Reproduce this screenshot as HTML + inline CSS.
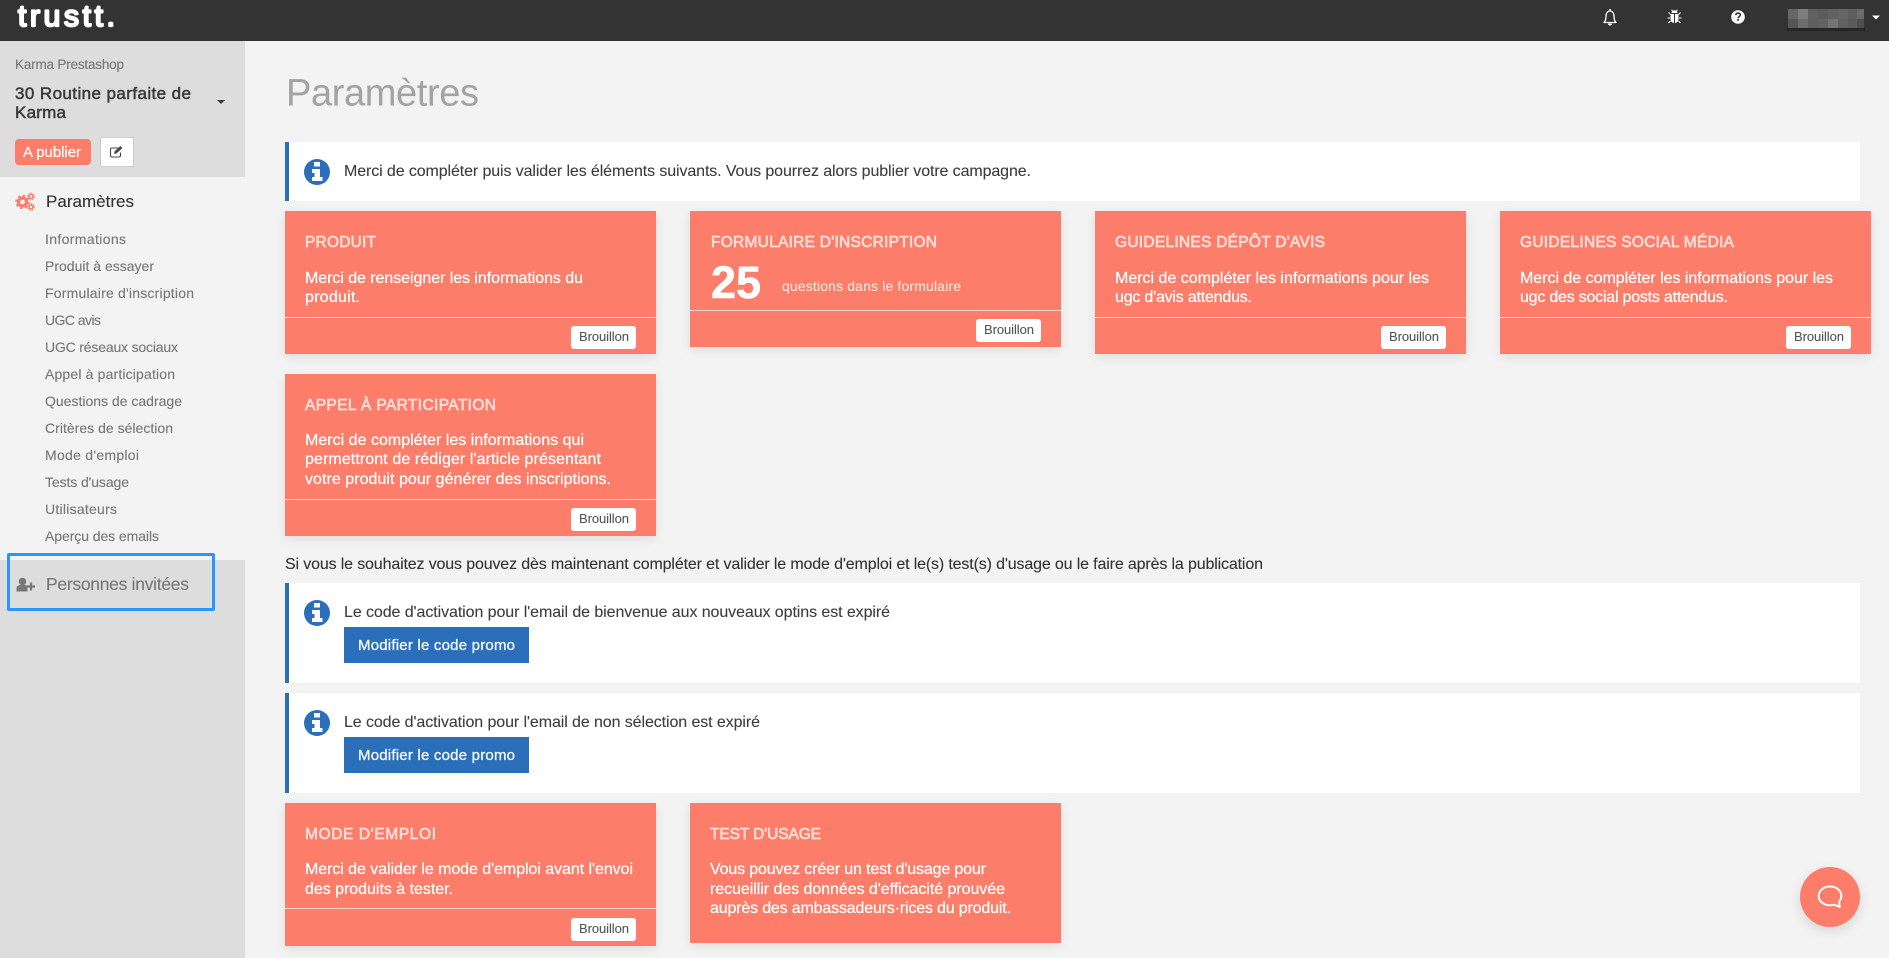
<!DOCTYPE html>
<html lang="fr">
<head>
<meta charset="utf-8">
<title>Paramètres</title>
<style>
html,body{margin:0;padding:0;width:1889px;height:958px;overflow:hidden;background:#f3f3f3}
.b{position:absolute;box-sizing:border-box}
.card{background:#fc7d69;box-shadow:0 3px 10px rgba(0,0,0,.09)}
.div{background:#f6d5cf;height:1px}
.br{background:#fff;border-radius:3px;width:65px;height:23px}
.al{background:#fff;border-left:4px solid #2b6fbb;left:285px;width:1575px}
.pb{background:#2b6fbb;left:344px;width:185px;height:36px}
svg.l{position:absolute;left:0;top:0}
text{font-family:"Liberation Sans",sans-serif;white-space:pre}
.s{font-size:14px;fill:#777;stroke:#777;stroke-width:.12}
.c{font-size:16px;fill:#fff;stroke:#fff;stroke-width:.22}
.h{font-size:15.5px;font-weight:400;fill:#ffdcd6;stroke:#ffdcd6;stroke-width:.7}
.a{font-size:16px;fill:#3d3d3d;stroke:#3d3d3d;stroke-width:.1}
.w{font-size:13px;fill:#555;stroke:#555;stroke-width:.1}
.p{font-size:15px;fill:#f0f5fb;stroke:#f0f5fb;stroke-width:.35}
</style>
</head>
<body>
<div class="b" style="left:0;top:0;width:1889px;height:41px;background:#333"></div>
<div class="b" style="left:0;top:41px;width:245px;height:136px;background:#ddd"></div>
<div class="b" style="left:0;top:560px;width:245px;height:398px;background:#ddd"></div>
<div class="b" style="left:15px;top:139px;width:76px;height:26px;background:#fc7d69;border-radius:4px"></div>
<div class="b" style="left:100px;top:137px;width:34px;height:30px;background:#fff;border:1px solid #ccc"></div>
<div class="b" style="left:7px;top:553px;width:208px;height:58px;border:3px solid #2b95ff;border-radius:2px"></div>

<div class="b al" style="top:142px;height:59px"></div>
<div class="b card" style="left:285px;top:211px;width:371px;height:143px"></div>
<div class="b div" style="left:285px;top:317px;width:371px"></div>
<div class="b br" style="left:571px;top:326px"></div>
<div class="b card" style="left:690px;top:211px;width:371px;height:136px"></div>
<div class="b div" style="left:690px;top:310px;width:371px"></div>
<div class="b br" style="left:976px;top:319px"></div>
<div class="b card" style="left:1095px;top:211px;width:371px;height:143px"></div>
<div class="b div" style="left:1095px;top:317px;width:371px"></div>
<div class="b br" style="left:1381px;top:326px"></div>
<div class="b card" style="left:1500px;top:211px;width:371px;height:143px"></div>
<div class="b div" style="left:1500px;top:317px;width:371px"></div>
<div class="b br" style="left:1786px;top:326px"></div>
<div class="b card" style="left:285px;top:374px;width:371px;height:162px"></div>
<div class="b div" style="left:285px;top:499px;width:371px"></div>
<div class="b br" style="left:571px;top:508px"></div>
<div class="b al" style="top:583px;height:100px"></div>
<div class="b pb" style="top:627px"></div>
<div class="b al" style="top:693px;height:100px"></div>
<div class="b pb" style="top:737px"></div>
<div class="b card" style="left:285px;top:803px;width:371px;height:143px"></div>
<div class="b div" style="left:285px;top:908px;width:371px"></div>
<div class="b br" style="left:571px;top:918px"></div>
<div class="b card" style="left:690px;top:803px;width:371px;height:140px"></div>
<div class="b" style="left:1800px;top:867px;width:60px;height:60px;border-radius:50%;background:#fc7d69;box-shadow:0 4px 12px rgba(0,0,0,.12)"></div>

<svg class="l" width="1889" height="958" viewBox="0 0 1889 958" xmlns="http://www.w3.org/2000/svg">
<!-- logo -->
<text x="18" y="26" font-size="30" fill="#fff" stroke="#fff" stroke-width="2.200" stroke-linejoin="round" textLength="97">trustt.</text>

<!-- blurred user -->
<g>
<rect x="1787" y="28" width="78" height="3" fill="#262626"/>
<rect x="1788" y="9" width="10" height="10" fill="#666"/><rect x="1798" y="9" width="10" height="10" fill="#7d7d7d"/><rect x="1808" y="9" width="10" height="10" fill="#606060"/><rect x="1818" y="9" width="10" height="10" fill="#5c5c5c"/><rect x="1828" y="9" width="10" height="10" fill="#626262"/><rect x="1838" y="9" width="10" height="10" fill="#656565"/><rect x="1848" y="9" width="9" height="10" fill="#5e5e5e"/><rect x="1857" y="9" width="7" height="10" fill="#6a6a6a"/>
<rect x="1788" y="19" width="10" height="9" fill="#565656"/><rect x="1798" y="19" width="10" height="9" fill="#6c6c6c"/><rect x="1808" y="19" width="10" height="9" fill="#5f5f5f"/><rect x="1818" y="19" width="10" height="9" fill="#626262"/><rect x="1828" y="19" width="10" height="9" fill="#737373"/><rect x="1838" y="19" width="10" height="9" fill="#616161"/><rect x="1848" y="19" width="9" height="9" fill="#5a5a5a"/><rect x="1857" y="19" width="7" height="9" fill="#4e4e4e"/>
</g>
<path d="M1872 15.500h8l-4 4z" fill="#fff"/>

<!-- bell -->
<path d="M1604 22.500c1.800-1.600 2-3.600 2-6.500 0-3 1.800-5 4-5s4 2 4 5c0 2.900.2 4.900 2 6.500z" fill="none" stroke="#fff" stroke-width="1.300" stroke-linejoin="round"/>
<path d="M1610 9v2" stroke="#fff" stroke-width="1.500"/>
<path d="M1608 23.500a2 2 0 0 0 4 0z" fill="#fff"/>
<!-- bug -->
<g fill="#fff">
<path d="M1671.500 13a3 2.800 0 0 1 6 0z"/>
<path d="M1670.500 14h3.500v9c-2.200-.3-3.500-1.800-3.500-4z"/>
<path d="M1675 14h3.500v5c0 2.200-1.300 3.700-3.500 4z"/>
</g>
<path d="M1670.500 14.500l-2-2M1678.500 14.500l2-2M1670 18h-2.500M1679 18h2.500M1670.500 21l-2 2M1678.500 21l2 2M1672.500 10.800l-1-1M1676.500 10.800l1-1" stroke="#fff" stroke-width="1.100" fill="none"/>
<!-- help -->
<circle cx="1738" cy="17" r="6.800" fill="#fff"/>
<path d="M1735.800 15.200c.2-1.500 1.100-2.200 2.300-2.200 1.300 0 2.200.8 2.200 1.900 0 1.700-2.200 1.700-2.200 3.300" fill="none" stroke="#333" stroke-width="1.600"/>
<rect x="1737.200" y="19" width="1.700" height="1.800" fill="#333"/>

<!-- sidebar top -->
<text x="15" y="69" font-size="13.500" fill="#777" stroke="#777" stroke-width=".12" textLength="109">Karma Prestashop</text>
<text x="15" y="99" font-size="17" fill="#3a3a3a" stroke="#3a3a3a" stroke-width=".5" textLength="176">30 Routine parfaite de</text>
<text x="15" y="118" font-size="17" fill="#3a3a3a" stroke="#3a3a3a" stroke-width=".5" textLength="51">Karma</text>
<path d="M217 100h8l-4 4z" fill="#3a3a3a"/>
<text x="23" y="157" font-size="15" fill="#fff" stroke="#fff" stroke-width=".2" textLength="58">A publier</text>
<!-- edit icon -->
<path d="M118.500 148h-6.500a1.500 1.500 0 0 0-1.500 1.500v6a1.500 1.500 0 0 0 1.500 1.500h7a1.500 1.500 0 0 0 1.500-1.500v-3" fill="none" stroke="#444" stroke-width="1.100"/>
<path d="M114 154l.6-2.600 5.800-5.400 2 2-5.800 5.400z" fill="#444"/>

<!-- gears -->
<g fill="none" stroke="#fc7d69">
<circle cx="22.500" cy="202" r="4" stroke-width="3.200"/>
<circle cx="22.500" cy="202" r="6.200" stroke-width="2" stroke-dasharray="2.400 2.470"/>
<circle cx="31" cy="196.500" r="2" stroke-width="1.600"/>
<circle cx="31" cy="196.500" r="3.400" stroke-width="1.200" stroke-dasharray="1.300 1.370"/>
<circle cx="31" cy="207" r="2" stroke-width="1.600"/>
<circle cx="31" cy="207" r="3.400" stroke-width="1.200" stroke-dasharray="1.300 1.370"/>
</g>

<!-- sidebar nav -->
<text x="46" y="207" font-size="17" fill="#333" stroke="#333" stroke-width=".12" textLength="88">Paramètres</text>
<text class="s" x="45" y="244" textLength="81">Informations</text>
<text class="s" x="45" y="271" textLength="109">Produit à essayer</text>
<text class="s" x="45" y="298" textLength="149">Formulaire d'inscription</text>
<text class="s" x="45" y="325" textLength="56">UGC avis</text>
<text class="s" x="45" y="352" textLength="133">UGC réseaux sociaux</text>
<text class="s" x="45" y="379" textLength="130">Appel à participation</text>
<text class="s" x="45" y="406" textLength="137">Questions de cadrage</text>
<text class="s" x="45" y="433" textLength="128">Critères de sélection</text>
<text class="s" x="45" y="460" textLength="94">Mode d'emploi</text>
<text class="s" x="45" y="487" textLength="84">Tests d'usage</text>
<text class="s" x="45" y="514" textLength="72">Utilisateurs</text>
<text class="s" x="45" y="541" textLength="114">Aperçu des emails</text>
<circle cx="22.500" cy="581.500" r="3.800" fill="#777"/>
<path d="M16.500 591.500v-3c0-2.500 2-3.500 4-3.500h4c1.500 0 2.500.5 3 1.200v5.300z" fill="#777"/>
<path d="M31 582.500v8M27 586.500h8" stroke="#777" stroke-width="2.200"/>
<text x="46" y="590" font-size="17.500" fill="#777" stroke="#777" stroke-width=".12" textLength="143">Personnes invitées</text>

<!-- main -->
<text x="286" y="105.500" font-size="38" fill="#a3a3a3" textLength="193">Paramètres</text>

<defs>
<g id="info">
<circle r="13" fill="#2b6fbb"/>
<path d="M-3-10h6v4.500h-6zM-5-3h8v8h2.500v4h-10.500v-4h2.500v-4h-2.500z" fill="#fff"/>
</g>
</defs>
<use href="#info" x="317" y="172"/>
<use href="#info" x="317" y="613"/>
<use href="#info" x="317" y="723"/>

<text class="a" x="344" y="176" textLength="687">Merci de compléter puis valider les éléments suivants. Vous pourrez alors publier votre campagne.</text>

<text class="h" x="305" y="247" textLength="71">PRODUIT</text>
<text class="c" x="305" y="283" textLength="278">Merci de renseigner les informations du</text>
<text class="c" x="305" y="302" textLength="55">produit.</text>
<text class="w" x="579" y="341" textLength="50">Brouillon</text>

<text class="h" x="711" y="247" textLength="226">FORMULAIRE D'INSCRIPTION</text>
<text x="711" y="298" font-size="45" font-weight="700" fill="#fff" stroke="#fff" stroke-width=".6" textLength="50">25</text>
<text x="782" y="291" font-size="14" fill="#ffe3de" stroke="#ffe3de" stroke-width=".1" textLength="179">questions dans le formulaire</text>
<text class="w" x="984" y="334" textLength="50">Brouillon</text>

<text class="h" x="1115" y="247" textLength="210">GUIDELINES DÉPÔT D'AVIS</text>
<text class="c" x="1115" y="283" textLength="314">Merci de compléter les informations pour les</text>
<text class="c" x="1115" y="302" textLength="137">ugc d'avis attendus.</text>
<text class="w" x="1389" y="341" textLength="50">Brouillon</text>

<text class="h" x="1520" y="247" textLength="214">GUIDELINES SOCIAL MÉDIA</text>
<text class="c" x="1520" y="283" textLength="313">Merci de compléter les informations pour les</text>
<text class="c" x="1520" y="302" textLength="208">ugc des social posts attendus.</text>
<text class="w" x="1794" y="341" textLength="50">Brouillon</text>

<text class="h" x="305" y="410" textLength="191">APPEL À PARTICIPATION</text>
<text class="c" x="305" y="445" textLength="279">Merci de compléter les informations qui</text>
<text class="c" x="305" y="464" textLength="296">permettront de rédiger l'article présentant</text>
<text class="c" x="305" y="484" textLength="306">votre produit pour générer des inscriptions.</text>
<text class="w" x="579" y="523" textLength="50">Brouillon</text>

<text x="285" y="569" font-size="16" fill="#333" stroke="#333" stroke-width=".1" textLength="978">Si vous le souhaitez vous pouvez dès maintenant compléter et valider le mode d'emploi et le(s) test(s) d'usage ou le faire après la publication</text>

<text class="a" x="344" y="617" textLength="546">Le code d'activation pour l'email de bienvenue aux nouveaux optins est expiré</text>
<text class="p" x="358" y="650" textLength="157">Modifier le code promo</text>
<text class="a" x="344" y="727" textLength="416">Le code d'activation pour l'email de non sélection est expiré</text>
<text class="p" x="358" y="760" textLength="157">Modifier le code promo</text>

<text class="h" x="305" y="839" textLength="131">MODE D'EMPLOI</text>
<text class="c" x="305" y="874" textLength="328">Merci de valider le mode d'emploi avant l'envoi</text>
<text class="c" x="305" y="894" textLength="148">des produits à tester.</text>
<text class="w" x="579" y="933" textLength="50">Brouillon</text>

<text class="h" x="710" y="839" textLength="111">TEST D'USAGE</text>
<text class="c" x="710" y="874" textLength="276">Vous pouvez créer un test d'usage pour</text>
<text class="c" x="710" y="894" textLength="295">recueillir des données d'efficacité prouvée</text>
<text class="c" x="710" y="913" textLength="301">auprès des ambassadeurs·rices du produit.</text>

<!-- chat -->
<path d="M1830 886.500c6.300 0 11.300 4 11.300 9.300 0 2.300-.8 4.200-2.200 5.800l.6 5.400-5.400-2.300c-1.300.4-2.800.6-4.300.6-6.300 0-11.300-4-11.300-9.300 0-5.500 5-9.500 11.300-9.500z" fill="none" stroke="#fff" stroke-width="2" stroke-linejoin="round"/>
</svg>
</body>
</html>
